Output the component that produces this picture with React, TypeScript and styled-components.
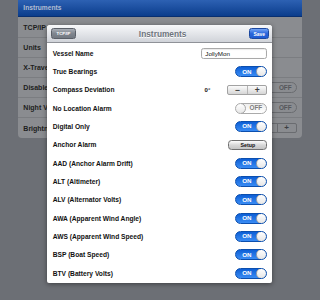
import styled, { createGlobalStyle } from 'styled-components';

const GlobalStyle = createGlobalStyle`
  html, body {
    margin: 0;
    padding: 0;
    width: 320px;
    height: 300px;
    overflow: hidden;
    background: #6c6f75;
    font-family: "Liberation Sans", Arial, sans-serif;
  }
`;

// iPad layout scaled down: one point is 5/12 px
const ROW = 18.33;

const Screen = styled.div`
    position: relative;
    width: 320px;
    height: 300px;
    display: flex;
    background: #6c6f75;
`;

const Gutter = styled.div`
    width: 18.33px;
    flex: none;
`;

const Main = styled.div`
    width: 283.33px;
    display: flex;
    flex-direction: column;
    align-items: stretch;
`;

const TopBar = styled.div`
    height: 16.67px;
    box-sizing: border-box;
    padding-left: 5px;
    display: flex;
    align-items: center;
    background: linear-gradient(#2d61b3, #0b3d8c);
    border-bottom: 1px solid #082f70;
    color: #b3bfd3;
    font-size: 6.67px;
    font-weight: bold;
`;

const GroupTable = styled.div`
    background: #8a8c90;
    padding-top: 1.7px;
    border-radius: 0 0 4px 4px;
`;

const BgRow = styled.div`
    height: 19.95px;
    box-sizing: border-box;
    padding: 0 5px;
    display: flex;
    align-items: center;
    justify-content: space-between;
    border-bottom: 1px solid #7b7d81;
    color: #1d1e20;
    font-size: 7px;
    font-weight: bold;
    &:last-child {
      border-bottom: none;
    }
`;

const BgSwitch = styled.div`
    width: 32px;
    height: 11px;
    box-sizing: border-box;
    border: 1px solid #6a6c70;
    border-radius: 6px;
    display: flex;
    align-items: center;
    justify-content: flex-end;
    padding-right: 4px;
    color: #55575b;
    font-size: 6.4px;
    font-weight: bold;
`;

const BgStepper = styled.div`
    width: 40px;
    height: 10px;
    box-sizing: border-box;
    border: 1px solid #6a6c70;
    border-radius: 2px;
    display: grid;
    grid-template-columns: 1fr 1fr;
    color: #3c3e42;
    font-size: 8px;
    font-weight: bold;
    span {
      display: flex;
      align-items: center;
      justify-content: center;
      line-height: 1;
    }
    span + span {
      border-left: 1px solid #6a6c70;
    }
`;

const Sheet = styled.div`
    position: absolute;
    left: 47.33px;
    top: 25px;
    width: 225px;
    height: 258.33px;
    background: #fff;
    border-radius: 3px 3px 2px 2px;
    box-shadow: 0 1px 5px rgba(0, 0, 0, 0.45);
    overflow: hidden;
    display: flex;
    flex-direction: column;
`;

const SheetBar = styled.div`
    height: 18.33px;
    flex: none;
    box-sizing: border-box;
    padding: 0 3px 0 3.7px;
    display: flex;
    align-items: center;
    justify-content: space-between;
    background: linear-gradient(#f7f8fa, #d0d3d9);
    border-bottom: 1px solid #8f9298;
`;

const SheetTitle = styled.div`
    color: #6d737c;
    font-size: 8.33px;
    font-weight: bold;
    text-shadow: 0 0.5px 0 #fff;
`;

const BarButton = styled.div<{ $primary?: boolean }>`
    height: 11px;
    width: ${p => (p.$primary ? '20px' : '25px')};
    box-sizing: border-box;
    border-radius: 2.5px;
    display: flex;
    align-items: center;
    justify-content: center;
    color: #fff;
    font-size: ${p => (p.$primary ? '5px' : '4.3px')};
    font-weight: bold;
    background: ${p => (p.$primary
      ? 'linear-gradient(#75a6f6, #2b66da 50%, #1f5bd2)'
      : 'linear-gradient(#a9aeb6, #80868f 50%, #727881)')};
    border: 1px solid ${p => (p.$primary ? '#1c48a0' : '#5a5f68')};
`;

const SheetBody = styled.div`
    padding-top: 0.8px;
    display: flex;
    flex-direction: column;
`;

const Row = styled.div`
    height: ${ROW}px;
    flex: none;
    box-sizing: border-box;
    padding: 0 5px 0 5.4px;
    display: flex;
    align-items: center;
    justify-content: space-between;
`;

const Label = styled.div`
    color: #111;
    font-size: 6.67px;
    font-weight: bold;
    white-space: nowrap;
`;

const TextField = styled.input`
    width: 66px;
    height: 11.3px;
    box-sizing: border-box;
    margin: 0;
    padding: 0 3px;
    border: 1px solid #a9a9a9;
    border-radius: 2.5px;
    box-shadow: inset 0 0.5px 1px rgba(0, 0, 0, 0.15);
    font-family: "Liberation Sans", Arial, sans-serif;
    font-size: 6.25px;
    color: #111;
    outline: none;
`;

const Switch = styled.div<{ $on: boolean }>`
    width: 32px;
    height: 11px;
    box-sizing: border-box;
    border-radius: 5.5px;
    display: flex;
    flex-direction: ${p => (p.$on ? 'row' : 'row-reverse')};
    align-items: center;
    overflow: hidden;
    background: ${p => (p.$on
      ? 'linear-gradient(#0d5fd6, #3a8cf4)'
      : 'linear-gradient(#eeeeee, #ffffff)')};
    border: 1px solid ${p => (p.$on ? '#0c4fae' : '#aaaaaa')};
`;

const SwitchText = styled.span<{ $on: boolean }>`
    flex: 1;
    text-align: center;
    color: ${p => (p.$on ? '#fff' : '#7d7d7d')};
    font-size: ${p => (p.$on ? '6.2px' : '6.4px')};
    font-weight: bold;
    line-height: 1;
`;

const Knob = styled.span`
    width: 11px;
    height: 11px;
    margin: -1px;
    flex: none;
    box-sizing: border-box;
    border-radius: 50%;
    border: 1px solid #a5a5a5;
    background: linear-gradient(#ffffff, #e6e6e6);
`;

const Deviation = styled.div`
    display: flex;
    align-items: center;
    gap: 17px;
`;

const Degrees = styled.span`
    color: #111;
    font-size: 6px;
    font-weight: bold;
`;

const Stepper = styled.div`
    width: 40px;
    height: 10px;
    box-sizing: border-box;
    border: 1px solid #a2a2a2;
    border-radius: 2px;
    display: grid;
    grid-template-columns: 1fr 1fr;
    background: linear-gradient(#fbfbfb, #d6d6d6);
    color: #3e3e3e;
    font-size: 8.5px;
    font-weight: bold;
    span {
      display: flex;
      align-items: center;
      justify-content: center;
      line-height: 1;
    }
    span + span {
      border-left: 1px solid #b4b4b4;
    }
`;

const SetupButton = styled.div`
    width: 39px;
    height: 10px;
    box-sizing: border-box;
    border: 1px solid #707070;
    border-radius: 3.5px;
    display: flex;
    align-items: center;
    justify-content: center;
    background: linear-gradient(#fdfdfd, #d8d8d8 50%, #c4c4c4);
    color: #111;
    font-size: 5.3px;
    font-weight: bold;
`;

function Toggle({ on }: { on: boolean }) {
    return (
        <Switch $on={on}>
            <SwitchText $on={on}>{on ? 'ON' : 'OFF'}</SwitchText>
            <Knob />
        </Switch>
    );
}

const instruments = [
    'AAD (Anchor Alarm Drift)',
    'ALT (Altimeter)',
    'ALV (Alternator Volts)',
    'AWA (Apparent Wind Angle)',
    'AWS (Apparent Wind Speed)',
    'BSP (Boat Speed)',
    'BTV (Battery Volts)',
];

export default function App() {
    return (
        <>
            <GlobalStyle />
            <Screen>
                <Gutter />
                <Main>
                    <TopBar>Instruments</TopBar>
                    <GroupTable>
                        <BgRow>TCP/IP Settings</BgRow>
                        <BgRow>Units</BgRow>
                        <BgRow>X-Travel</BgRow>
                        <BgRow>Disable Sleep<BgSwitch>OFF</BgSwitch></BgRow>
                        <BgRow>Night Vision<BgSwitch>OFF</BgSwitch></BgRow>
                        <BgRow>Brightness<BgStepper><span>−</span><span>+</span></BgStepper></BgRow>
                    </GroupTable>
                </Main>
                <Gutter />

                <Sheet>
                    <SheetBar>
                        <BarButton>TCP/IP</BarButton>
                        <SheetTitle>Instruments</SheetTitle>
                        <BarButton $primary>Save</BarButton>
                    </SheetBar>
                    <SheetBody>
                        <Row>
                            <Label>Vessel Name</Label>
                            <TextField defaultValue="JollyMon" readOnly />
                        </Row>
                        <Row>
                            <Label>True Bearings</Label>
                            <Toggle on />
                        </Row>
                        <Row>
                            <Label>Compass Deviation</Label>
                            <Deviation>
                                <Degrees>0°</Degrees>
                                <Stepper><span>−</span><span>+</span></Stepper>
                            </Deviation>
                        </Row>
                        <Row>
                            <Label>No Location Alarm</Label>
                            <Toggle on={false} />
                        </Row>
                        <Row>
                            <Label>Digital Only</Label>
                            <Toggle on />
                        </Row>
                        <Row>
                            <Label>Anchor Alarm</Label>
                            <SetupButton>Setup</SetupButton>
                        </Row>
                        {instruments.map(name => (
                            <Row key={name}>
                                <Label>{name}</Label>
                                <Toggle on />
                            </Row>
                        ))}
                    </SheetBody>
                </Sheet>
            </Screen>
        </>
    );
}
